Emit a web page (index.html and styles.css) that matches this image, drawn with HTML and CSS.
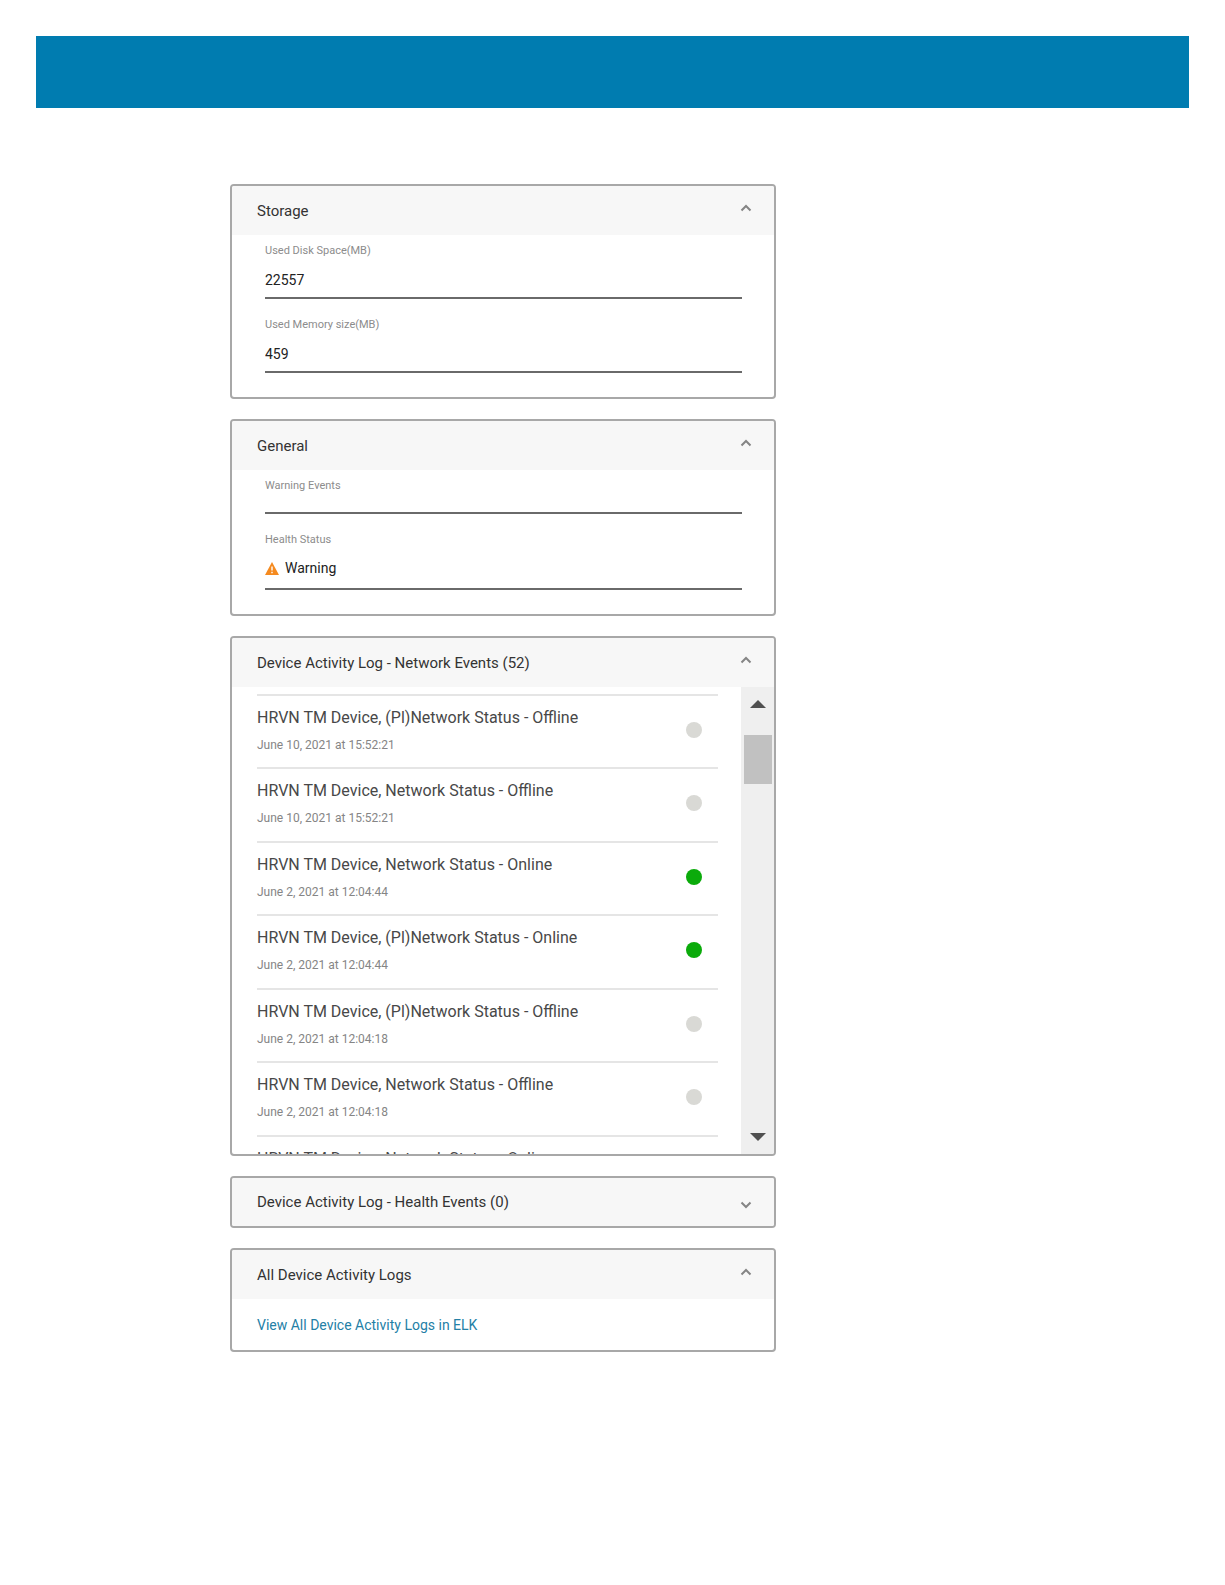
FILE: index.html
```html
<!DOCTYPE html>
<html lang="en">
<head>
	<meta charset="utf-8">
	<title>Device details</title>
	<link rel="stylesheet" href="styles.css">
</head>
<body>
	<header class="banner"></header>

	<main class="panels">
		<section class="panel">
			<button class="panel_head" type="button" aria-expanded="true">
				<span>Storage</span>
				<svg class="chevron" viewBox="0 0 12 8"><path d="M1.5 6.5 L6 2 L10.5 6.5"/></svg>
			</button>
			<div class="fields">
				<div class="field">
					<label for="disk">Used Disk Space(MB)</label>
					<div class="value"><input id="disk" type="text" value="22557" readonly></div>
				</div>
				<div class="field">
					<label for="memory">Used Memory size(MB)</label>
					<div class="value"><input id="memory" type="text" value="459" readonly></div>
				</div>
			</div>
		</section>

		<section class="panel">
			<button class="panel_head" type="button" aria-expanded="true">
				<span>General</span>
				<svg class="chevron" viewBox="0 0 12 8"><path d="M1.5 6.5 L6 2 L10.5 6.5"/></svg>
			</button>
			<div class="fields">
				<div class="field">
					<label for="events">Warning Events</label>
					<div class="value empty"><input id="events" type="text" value="" readonly></div>
				</div>
				<div class="field">
					<label for="health">Health Status</label>
					<div class="value status">
						<svg class="warn_icon" viewBox="0 0 14 13"><path d="M7 0 L14 13 H0 Z" fill="#f58a1f"/><path d="M7 4.5 V8.5 M7 9.8 V11.3" stroke="#fff" stroke-width="1.4"/></svg>
						<input id="health" type="text" value="Warning" readonly>
					</div>
				</div>
			</div>
		</section>

		<section class="panel">
			<button class="panel_head" type="button" aria-expanded="true">
				<span>Device Activity Log - Network Events (52)</span>
				<svg class="chevron" viewBox="0 0 12 8"><path d="M1.5 6.5 L6 2 L10.5 6.5"/></svg>
			</button>
			<div class="log">
				<ul class="log_list">
					<li>
						<div><p>HRVN TM Device, (Pl)Network Status - Offline</p><time>June 10, 2021 at 15:52:21</time></div>
						<i class="dot"></i>
					</li>
					<li>
						<div><p>HRVN TM Device, Network Status - Offline</p><time>June 10, 2021 at 15:52:21</time></div>
						<i class="dot"></i>
					</li>
					<li>
						<div><p>HRVN TM Device, Network Status - Online</p><time>June 2, 2021 at 12:04:44</time></div>
						<i class="dot online"></i>
					</li>
					<li>
						<div><p>HRVN TM Device, (Pl)Network Status - Online</p><time>June 2, 2021 at 12:04:44</time></div>
						<i class="dot online"></i>
					</li>
					<li>
						<div><p>HRVN TM Device, (Pl)Network Status - Offline</p><time>June 2, 2021 at 12:04:18</time></div>
						<i class="dot"></i>
					</li>
					<li>
						<div><p>HRVN TM Device, Network Status - Offline</p><time>June 2, 2021 at 12:04:18</time></div>
						<i class="dot"></i>
					</li>
					<li>
						<div><p>HRVN TM Device, Network Status - Online</p></div>
					</li>
				</ul>
				<div class="scrollbar">
					<button type="button" aria-label="Scroll up"><svg viewBox="0 0 16 8"><path d="M0 8 L8 0 L16 8 Z"/></svg></button>
					<div class="thumb"></div>
					<button class="down" type="button" aria-label="Scroll down"><svg viewBox="0 0 16 8"><path d="M0 0 L8 8 L16 0 Z"/></svg></button>
				</div>
			</div>
		</section>

		<section class="panel">
			<button class="panel_head closed" type="button" aria-expanded="false">
				<span>Device Activity Log - Health Events (0)</span>
				<svg class="chevron" viewBox="0 0 12 8"><path d="M1.5 1.5 L6 6 L10.5 1.5"/></svg>
			</button>
		</section>

		<section class="panel">
			<button class="panel_head" type="button" aria-expanded="true">
				<span>All Device Activity Logs</span>
				<svg class="chevron" viewBox="0 0 12 8"><path d="M1.5 6.5 L6 2 L10.5 6.5"/></svg>
			</button>
			<div class="link_row">
				<a href="#">View All Device Activity Logs in ELK</a>
			</div>
		</section>
	</main>
</body>
</html>
```
FILE: styles.css
```css
*{box-sizing: border-box; margin: 0; padding: 0}
body{padding: 36px; background: #fff; font-family: Roboto, "Liberation Sans", sans-serif; color: #333;}
ul{list-style: none;}
button,input{border: 0; background: none; font: inherit; color: inherit;}

.banner{height: 72px; background: #007cb0;}

/* panels */
.panels{display: flex; flex-direction: column; gap: 20px; max-width: 740px; margin-top: 76px; padding-left: 194px;}
.panel{border: 2px solid #a8a8a8; border-radius: 4px; overflow: hidden;}
.panel_head{display: flex; justify-content: space-between; align-items: center; width: 100%; height: 49px; padding: 0 22px 0 25px; background: #f7f7f7; font-size: 15px; line-height: 20px; text-align: left;}
.chevron{width: 12px; height: 8px; margin-bottom: 6px; fill: none; stroke: #858585; stroke-width: 2;}
.panel_head.closed{height: 48px;}
.closed .chevron{margin: 6px 0 0;}

/* read only fields */
.fields{padding: 8px 32px 24px 33px;}
.field + .field{margin-top: 18px;}
.field label{display: block; font-size: 11px; line-height: 16px; color: #8c8c8c;}
.value{display: flex; align-items: center; gap: 6px; height: 40px; padding-top: 4px; border-bottom: 2px solid #6a6a6a;}
.value input{flex: 1; min-width: 0; font-size: 14px; line-height: 20px; color: #222;}
.value.empty{height: 20px; padding-top: 0;}
.value.status{height: 42px; padding-top: 0;}
.warn_icon{width: 14px; height: 13px;}

/* activity log */
.log{display: flex; height: 467px;}
.log_list{flex: 1; display: grid; grid-template-rows: repeat(7, 1fr); height: 514px; margin: 7px 23px 0 25px;}
.log_list li{display: flex; justify-content: space-between; padding: 12px 16px 0 0; border-top: 2px solid #e5e5e5;}
.log_list p{font-size: 16px; line-height: 20px; color: #484848;}
.log_list time{display: block; margin-top: 9px; font-size: 12px; line-height: 16px; color: #858585;}
.dot{width: 16px; height: 16px; margin-top: 14px; border-radius: 50%; background: #d9d9d5;}
.dot.online{background: #0bab0b;}

.scrollbar{display: flex; flex-direction: column; width: 33px; padding: 0 2px 0 3px; background: #efefef;}
.scrollbar button{display: flex; justify-content: center; align-items: center; height: 34px;}
.scrollbar svg{width: 16px; height: 8px; fill: #505050;}
.thumb{height: 49px; margin-top: 14px; background: #c1c1c1;}
.scrollbar .down{margin-top: auto;}

.link_row{padding: 16px 25px 15px;}
.link_row a{font-size: 14px; line-height: 20px; color: #2480a6; text-decoration: none;}
```
